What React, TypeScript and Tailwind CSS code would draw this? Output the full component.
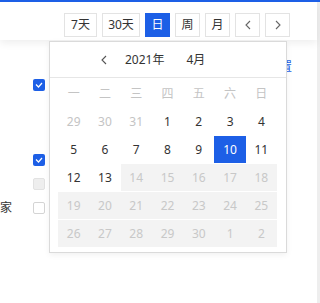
import React from "react";

const weekdays = ["一", "二", "三", "四", "五", "六", "日"];

type Day = { n: number; muted?: boolean; disabled?: boolean; active?: boolean };

const days: Day[] = [
  { n: 29, muted: true },
  { n: 30, muted: true },
  { n: 31, muted: true },
  ...[1, 2, 3, 4, 5, 6, 7, 8, 9, 10, 11, 12, 13].map((n) => ({ n, active: n === 10 })),
  ...Array.from({ length: 17 }, (_, i) => ({ n: 14 + i, disabled: true })),
  { n: 1, disabled: true },
  { n: 2, disabled: true },
];

function Chevron({ dir, className }: { dir: "left" | "right"; className?: string }) {
  return (
    <svg width="6" height="10" viewBox="0 0 6 10" className={className}>
      <polyline
        points={dir === "left" ? "5,1 1,5 5,9" : "1,1 5,5 1,9"}
        fill="none"
        stroke="currentColor"
        strokeWidth="1.1"
      />
    </svg>
  );
}

function ToolButton({ children, w, active }: { children: React.ReactNode; w: string; active?: boolean }) {
  return (
    <button
      className={`${w} h-[24px] flex items-center justify-center border text-[12px] ${
        active ? "bg-[#1d5fe6] border-[#1d5fe6] text-white" : "bg-white border-[#e3e3e3] text-[#333]"
      }`}
    >
      {children}
    </button>
  );
}

function Box({ kind }: { kind: "checked" | "disabled" | "empty" }) {
  if (kind === "checked")
    return (
      <span className="w-[12px] h-[12px] rounded-[2px] bg-[#1d5fe6] flex items-center justify-center">
        <svg width="8" height="6" viewBox="0 0 8 6">
          <polyline points="1,2.5 3.5,5 7,1" fill="none" stroke="white" strokeWidth="1.2" />
        </svg>
      </span>
    );
  if (kind === "disabled")
    return <span className="w-[12px] h-[12px] rounded-[2px] bg-[#eeeeee] border border-[#e2e2e2]" />;
  return <span className="w-[12px] h-[12px] rounded-[2px] bg-white border border-[#d4d4d4]" />;
}

export default function App() {
  return (
    <div className="relative w-[320px] h-[303px] overflow-hidden bg-white border-t-2 border-[#1d5fe6] font-['Noto_Sans','Noto_Sans_CJK_SC',sans-serif]">
      <div className="flex h-full">
        <div className="flex-1 flex flex-col">
          {/* toolbar */}
          <div className="relative z-10 h-[38px] bg-white shadow-[0_3px_8px_rgba(0,0,0,0.07)] flex items-start justify-end pt-[11px] pr-[27px] gap-[5px]">
            <ToolButton w="w-[33px]">7天</ToolButton>
            <ToolButton w="w-[38px]">30天</ToolButton>
            <ToolButton w="w-[25px]" active>
              日
            </ToolButton>
            <ToolButton w="w-[25px]">周</ToolButton>
            <ToolButton w="w-[25px]">月</ToolButton>
            <ToolButton w="w-[25px]">
              <Chevron dir="left" className="text-[#666]" />
            </ToolButton>
            <ToolButton w="w-[25px]">
              <Chevron dir="right" className="text-[#666]" />
            </ToolButton>
          </div>

          {/* page body behind the popover */}
          <div className="flex flex-col text-[12px] text-[#333]">
            <div className="h-[14px] mt-[20px] flex justify-end pr-[25px]">
              <span className="text-[#1d5fe6] leading-[14px]">设置</span>
            </div>
            <div className="mt-[5px] pl-[33px] flex">
              <Box kind="checked" />
            </div>
            <div className="mt-[63px] pl-[33px] flex">
              <Box kind="checked" />
            </div>
            <div className="mt-[12px] pl-[33px] flex">
              <Box kind="disabled" />
            </div>
            <div className="mt-[11px] flex items-center">
              <span className="w-[33px] leading-[13px]">家</span>
              <Box kind="empty" />
            </div>
          </div>
        </div>
        <div className="w-[3px] bg-[#eeeeee]" />
      </div>

      {/* date picker popover */}
      <div className="absolute z-20 left-[49px] top-[39px] w-[238px] h-[212px] bg-white border border-[#dadada] shadow-[0_2px_6px_rgba(0,0,0,0.06)] flex flex-col">
        <div className="h-[36px] border-b border-[#e6e6e6] flex items-center text-[12px] text-[#333]">
          <Chevron dir="left" className="ml-[51px] text-[#555]" />
          <span className="ml-[18px]">2021年</span>
          <span className="ml-[22px]">4月</span>
        </div>
        <div className="ml-[8px] w-[219px] mt-[2px] grid grid-cols-7 gap-y-[1px] text-[12px]">
          {weekdays.map((d) => (
            <div key={d} className="h-[27px] flex items-center justify-center text-[#c4c4c4]">
              {d}
            </div>
          ))}
          {days.map((d, i) => (
            <div
              key={i}
              className={`h-[27px] flex items-center justify-center ${
                d.active
                  ? "bg-[#1d5fe6] text-white"
                  : d.disabled
                  ? "bg-[#f3f3f3] text-[#c8c8c8]"
                  : d.muted
                  ? "text-[#c4c4c4]"
                  : "text-[#333]"
              }`}
            >
              {d.n}
            </div>
          ))}
        </div>
      </div>
    </div>
  );
}
